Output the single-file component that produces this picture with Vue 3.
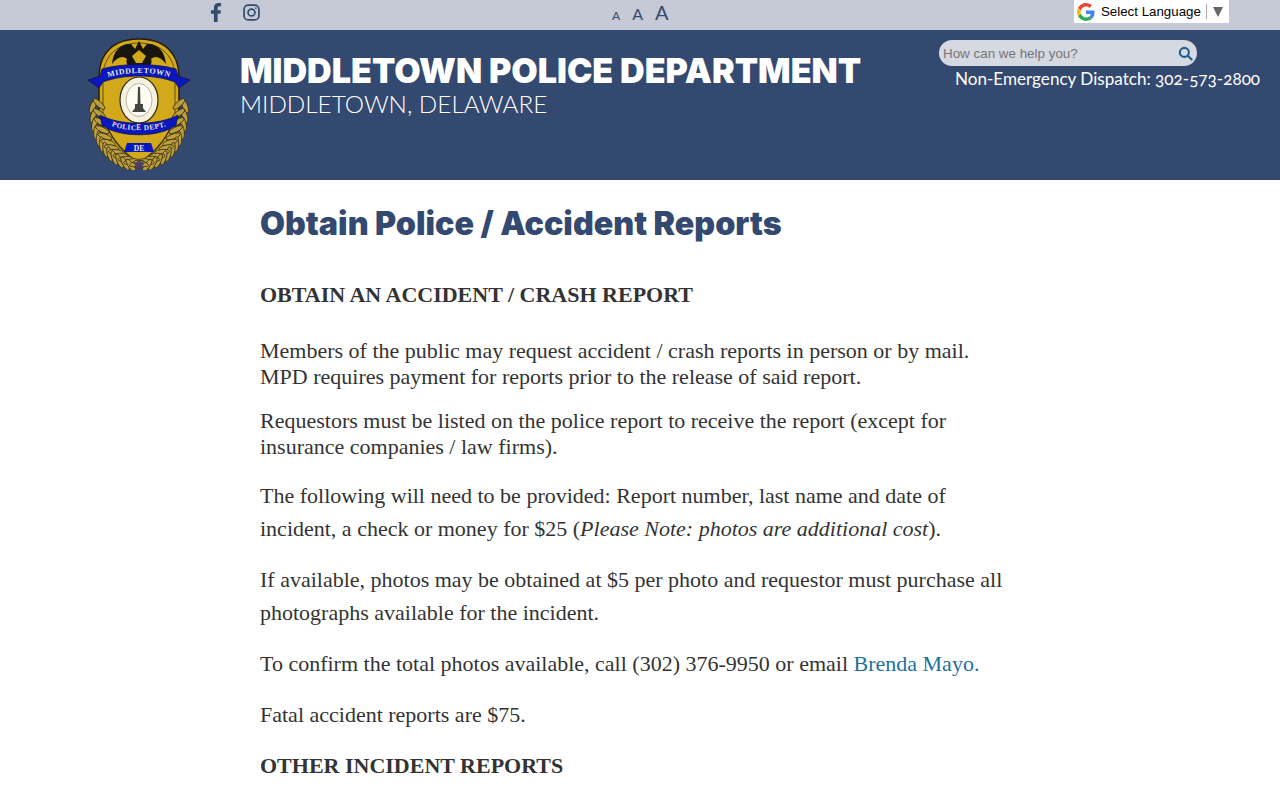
<template>
  <div class="page">
    <div class="topbar">
      <div class="social">
        <svg class="fb" viewBox="0 0 320 512" width="12" height="19"><path fill="#33496f" d="M279 288l14-93h-89v-60c0-25 12-50 52-50h41V6S260 0 225 0c-73 0-121 44-121 125v70H23v93h81v224h100V288z"/></svg>
        <svg class="ig" viewBox="0 0 24 24" width="17" height="17" fill="none" stroke="#33496f" stroke-width="2.4"><rect x="1.5" y="1.5" width="21" height="21" rx="6"/><circle cx="12" cy="12" r="4.9"/><circle cx="18.2" cy="5.8" r="1.2" fill="#33496f" stroke="none"/></svg>
      </div>
      <div class="sizer">
        <span class="a1">A</span>
        <span class="a2">A</span>
        <span class="a3">A</span>
      </div>
      <div class="translate">
        <svg viewBox="0 0 48 48" width="18" height="18"><path fill="#ea4335" d="M24 9.5c3.5 0 6.700 1.300 9.100 3.500l6.800-6.800C35.800 2.400 30.300 0 24 0 14.600 0 6.500 5.400 2.600 13.200l7.900 6.100C12.400 13.700 17.700 9.500 24 9.500z"/><path fill="#4285f4" d="M47 24.500c0-1.600-.1-3.100-.4-4.500H24v9h12.900c-.6 3-2.200 5.500-4.700 7.200l7.700 6C44.400 37.900 47 31.800 47 24.500z"/><path fill="#fbbc05" d="M10.500 28.700c-.5-1.400-.8-3-.8-4.700s.3-3.300.8-4.700l-7.900-6.100C.9 16.500 0 20.100 0 24s.9 7.500 2.600 10.800l7.900-6.100z"/><path fill="#34a853" d="M24 48c6.500 0 11.900-2.100 15.900-5.800l-7.700-6c-2.200 1.500-4.900 2.300-8.200 2.300-6.300 0-11.600-4.200-13.500-9.800l-7.900 6.100C6.500 42.600 14.600 48 24 48z"/></svg>
        <span class="lang">Select Language</span>
        <span class="sep"></span>
        <svg class="arrow" viewBox="0 0 10 10" width="10" height="10"><path d="M0 0H10L5 10Z" fill="#666"/></svg>
      </div>
    </div>

    <header class="header">
      <div class="logo">
        <svg viewBox="0 0 102 132" width="102" height="132">
          <!-- shield -->
          <path d="M51 1 C66 1 80 6 87 20 C92 30 91 40 91 46 L91 76 C88 96 72 116 51 130 C30 116 14 96 11 76 L11 46 C11 40 10 30 15 20 C22 6 36 1 51 1Z" fill="#d2a91b" stroke="#241f0c" stroke-width="1.500"/>
          <path d="M51 5 C64 5 77 10 83 22 C88 31 87 40 87 46 L87 76 C84 94 69 112 51 125 C33 112 18 94 15 76 L15 46 C15 40 14 31 19 22 C25 10 38 5 51 5Z" fill="none" stroke="#5f5013" stroke-width="1"/>
          <!-- eagle -->
          <path d="M24 26 C25 13 33 5 43 6 L47 11 L51 3 L55 11 L59 6 C69 5 77 13 78 26 C73 19 67 17 63 21 C65 26 61 30 56 28 L51 31 L46 28 C41 30 37 26 39 21 C35 17 29 19 24 26Z" fill="#17150e"/>
          <path d="M44 18 L51 12 L58 18 L54 25 L48 25Z" fill="#d2a91b"/>
          <path d="M30 33 C42 30 60 30 72 33" stroke="#241f0c" stroke-width="2" fill="none"/>
          <!-- wreath -->
          <path d="M16 78 C20 98 34 114 51 126 C68 114 82 98 86 78" fill="none" stroke="#342d10" stroke-width="1.200"/>
          <g v-for="(leaf, i) in leaves" :key="i" :transform="leaf.transform">
            <ellipse rx="7.500" ry="2.600" fill="#bd9f3e" stroke="#342d10" stroke-width=".8"/>
          </g>
          <!-- top banner -->
          <path d="M0 42 L12 38 L14 31 C34 25 68 25 88 31 L90 38 L102 42 L91 50 L87 44 C66 36 36 36 15 44 L11 50Z" fill="#0a17bd" stroke="#13134a" stroke-width=".8"/>
          <path id="topArc" d="M15 41 C35 33 67 33 87 41" fill="none"/>
          <text class="badge-text" font-size="7.800" letter-spacing=".6" fill="#e9e7d6"><textPath href="#topArc" startOffset="50%" text-anchor="middle">MIDDLETOWN</textPath></text>
          <!-- seal -->
          <ellipse cx="51" cy="62" rx="19" ry="23" fill="#f6f1df" stroke="#2c2a18" stroke-width="1.200"/>
          <ellipse cx="51" cy="62" rx="13" ry="16.500" fill="#fffdf4" stroke="#8a8a78" stroke-width=".6"/>
          <path d="M50 49 H52 L52.500 66 H55 V70 L58 74 H44 L47 70 V66 H49.500Z" fill="#45453f"/>
          <!-- lower banner -->
          <path d="M12 77 C32 88 70 88 90 77 L88 87 C72 100 30 100 14 87Z" fill="#0a17bd" stroke="#13134a" stroke-width=".8"/>
          <path id="lowArc" d="M15 84 C33 95 69 95 87 84" fill="none"/>
          <text class="badge-text" font-size="7.200" letter-spacing=".5" fill="#e9e7d6"><textPath href="#lowArc" startOffset="50%" text-anchor="middle">POLICE DEPT.</textPath></text>
          <!-- DE plate -->
          <path d="M39 105 H63 L66 114 H36Z" fill="#0a17bd"/>
          <text class="badge-text" x="51" y="112.500" text-anchor="middle" font-size="7.500" fill="#e9e7d6">DE</text>
          <path d="M51 120 L53 124 L57 125 L54 128 L55 132 L51 130 L47 132 L48 128 L45 125 L49 124Z" fill="#4a4060"/>
        </svg>
      </div>
      <div class="titles">
        <h1>MIDDLETOWN POLICE DEPARTMENT</h1>
        <div class="sub">MIDDLETOWN, DELAWARE</div>
      </div>
      <div class="contact">
        <div class="search">
          <span class="ph">How can we help you?</span>
          <svg viewBox="0 0 16 16" width="15" height="15" fill="none" stroke="#1f5f8b" stroke-width="2.200"><circle cx="6.800" cy="6.800" r="4.800"/><path d="M10.400 10.400 L14.500 14.500" stroke-linecap="round"/></svg>
        </div>
        <div class="dispatch">Non-Emergency Dispatch: 302-573-2800</div>
      </div>
    </header>

    <main class="content">
      <h2>Obtain Police / Accident Reports</h2>
      <h3 class="first">OBTAIN AN ACCIDENT / CRASH REPORT</h3>
      <p class="tight">Members of the public may request accident / crash reports in person or by mail. MPD requires payment for reports prior to the release of said report.</p>
      <p class="tight">Requestors must be listed on the police report to receive the report (except for insurance companies / law firms).</p>
      <p>The following will need to be provided: Report number, last name and date of incident, a check or money for $25 (<em>Please Note: photos are additional cost</em>).</p>
      <p>If available, photos may be obtained at $5 per photo and requestor must purchase all photographs available for the incident.</p>
      <p>To confirm the total photos available, call (302) 376-9950 or email <a href="#">Brenda Mayo.</a></p>
      <p>Fatal accident reports are $75.</p>
      <h3>OTHER INCIDENT REPORTS</h3>
    </main>
  </div>
</template>

<script setup>
// wreath leaves follow a curve down each side of the badge
const leaves = []
for (let i = 0; i < 12; i++) {
  const t = i / 12
  const u = 1 - t
  const x = u * u * u * 5 + 3 * u * u * t * 5 + 3 * u * t * t * 24 + t * t * t * 49
  const y = u * u * u * 68 + 3 * u * u * t * 108 + 3 * u * t * t * 124 + t * t * t * 129
  const dir = 72 - t * 62
  leaves.push({ transform: `translate(${x} ${y}) rotate(${dir + 40})` })
  leaves.push({ transform: `translate(${x + 6} ${y - 2}) rotate(${dir - 30})` })
  leaves.push({ transform: `translate(${102 - x} ${y}) rotate(${-dir - 40})` })
  leaves.push({ transform: `translate(${96 - x} ${y - 2}) rotate(${-dir + 30})` })
}
</script>

<style>
html, body {
  margin: 0;
  background: #fff;
  overflow: hidden;
}
</style>

<style scoped>
.page {
  height: 800px;
  overflow: hidden;
}
.topbar {
  height: 30px;
  background: #c5cad6;
  display: grid;
  grid-template-columns: 612px 462px 155px;
  align-items: start;
}
.social {
  display: flex;
  align-items: center;
  gap: 21px;
  padding: 3px 0 0 210px;
}
.sizer {
  display: flex;
  align-items: baseline;
  gap: 12px;
  padding-top: 2px;
  color: #33496f;
  font-family: "Lato", sans-serif;
  line-height: 20px;
}
.a1 { font-size: 12px; }
.a2 { font-size: 16px; }
.a3 { font-size: 20px; }
.translate {
  height: 23px;
  background: #fff;
  display: flex;
  align-items: center;
  font-family: "Liberation Sans", sans-serif;
  font-size: 13.300px;
  color: #000;
  padding-left: 3px;
}
.lang {
  margin-left: 6px;
}
.sep {
  width: 1px;
  height: 15px;
  background: #aaa;
  margin: 0 6px 0 5px;
}
.header {
  height: 150px;
  background: #33496f;
  display: flex;
  color: #fff;
}
.logo {
  width: 240px;
  flex: none;
  padding: 8px 0 0 88px;
  box-sizing: border-box;
}
.logo svg {
  display: block;
}
.badge-text {
  font-family: "Liberation Serif", serif;
  font-weight: 700;
}
.titles {
  width: 699px;
  flex: none;
  padding-top: 21px;
}
h1 {
  margin: 0;
  font-family: "Inter", sans-serif;
  font-size: 34.100px;
  line-height: 40px;
  font-weight: 900;
  white-space: nowrap;
}
.sub {
  font-family: "Lato", sans-serif;
  font-size: 24.300px;
  line-height: 26px;
  font-weight: 300;
}
.contact {
  width: 341px;
  padding-top: 10px;
  font-family: "Lato", sans-serif;
}
.search {
  width: 258px;
  height: 26px;
  background: #d5d9e2;
  border-radius: 13px;
  display: flex;
  align-items: center;
  justify-content: space-between;
  padding: 0 4px;
  box-sizing: border-box;
}
.ph {
  font-family: "Liberation Sans", sans-serif;
  font-size: 13.400px;
  color: #757575;
}
.dispatch {
  font-size: 17.100px;
  line-height: 26px;
  margin-left: 16px;
  white-space: nowrap;
  font-variant-numeric: oldstyle-nums;
}
.content {
  width: 750px;
  margin-left: 260px;
  font-family: "Liberation Serif", serif;
  font-size: 22px;
  color: #333;
}
h2 {
  margin: 0;
  padding-top: 24px;
  font-family: "Inter", sans-serif;
  font-size: 32.250px;
  line-height: 40px;
  font-weight: 900;
  color: #33496f;
}
h3 {
  margin: 16px 0 0;
  font-size: 22px;
  line-height: 33px;
  font-weight: 700;
}
h3.first {
  margin: 34px 0 27px;
}
p {
  margin: 0 0 18px;
  line-height: 33px;
}
p.tight {
  line-height: 26px;
}
p.tight + p.tight {
  margin-bottom: 19px;
}
a {
  color: #23709e;
  text-decoration: none;
}
</style>
